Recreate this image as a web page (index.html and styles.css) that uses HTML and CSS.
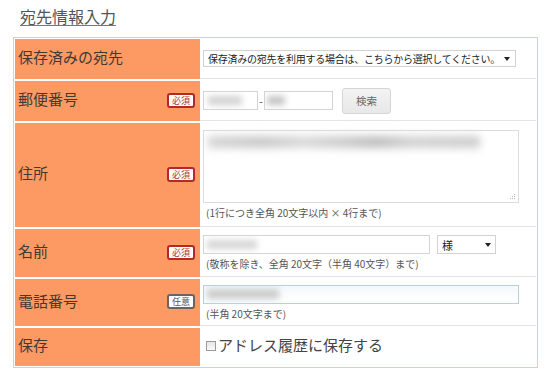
FILE: index.html
```html
<!DOCTYPE html>
<html lang="ja">
<head>
<meta charset="utf-8">
<title>宛先情報入力</title>
<link rel="stylesheet" href="styles.css">
</head>
<body>
<div class="page">
  <h1 class="title">宛先情報入力</h1>
  <div class="form">
    <div class="row r1">
      <div class="label"><span class="ltext">保存済みの宛先</span></div>
      <div class="value">
        <div class="select wide"><span class="seltext">保存済みの宛先を利用する場合は、こちらから選択してください。</span><i class="arrow"></i></div>
      </div>
    </div>
    <div class="row r2">
      <div class="label"><span class="ltext">郵便番号</span><span class="badge req">必須</span></div>
      <div class="value">
        <div class="line">
          <div class="input zip1"><span class="blur b-zip1"></span></div>
          <span class="dash">-</span>
          <div class="input zip2"><span class="blur b-zip2"></span></div>
          <div class="button">検索</div>
        </div>
      </div>
    </div>
    <div class="row r3">
      <div class="label"><span class="ltext">住所</span><span class="badge req">必須</span></div>
      <div class="value">
        <div class="textarea">
          <span class="blur b-addr"></span>
          <svg class="grip" width="6" height="6" viewBox="0 0 6 6"><g fill="#bbb"><rect x="4" y="0" width="1" height="1"/><rect x="2" y="2" width="1" height="1"/><rect x="4" y="2" width="1" height="1"/><rect x="0" y="4" width="1" height="1"/><rect x="2" y="4" width="1" height="1"/><rect x="4" y="4" width="1" height="1"/></g></svg>
        </div>
        <div class="hint">(1行につき全角 20文字以内 × 4行まで)</div>
      </div>
    </div>
    <div class="row r4">
      <div class="label"><span class="ltext">名前</span><span class="badge req">必須</span></div>
      <div class="value">
        <div class="line">
          <div class="input name"><span class="blur b-name"></span></div>
          <div class="select honor"><span>様</span><i class="arrow"></i></div>
        </div>
        <div class="hint">(敬称を除き、全角 20文字（半角 40文字）まで)</div>
      </div>
    </div>
    <div class="row r5">
      <div class="label"><span class="ltext">電話番号</span><span class="badge opt">任意</span></div>
      <div class="value">
        <div class="input tel"><span class="blur b-tel"></span></div>
        <div class="hint">(半角 20文字まで)</div>
      </div>
    </div>
    <div class="row r6">
      <div class="label"><span class="ltext">保存</span></div>
      <div class="value last">
        <label class="check"><span class="box"></span><span class="ctext">アドレス履歴に保存する</span></label>
      </div>
    </div>
  </div>
</div>
</body>
</html>
```

FILE: styles.css
```css
html, body {
  margin: 0;
  padding: 0;
  background: #ffffff;
}
body {
  font-family: "Noto Sans CJK JP", "Noto Sans", sans-serif;
  color: #444;
}
.page {
  padding: 0 0 0 13px;
  width: 525px;
}
.title {
  margin: 0;
  padding: 6px 0 0 7px;
  height: 30px;
  box-sizing: border-box;
  font-size: 16px;
  line-height: 20px;
  font-weight: normal;
  color: #555;
  text-decoration: underline;
  text-decoration-color: #777;
  text-underline-offset: 2px;
  text-decoration-thickness: 1px;
  margin-bottom: 7px;
}
.form {
  border: 1px solid #f1c9a6;
  padding: 1px;
  background: #fff;
}
.row {
  display: flex;
  margin-bottom: 2px;
}
.row.r6 { margin-bottom: 0; }
.r1 { height: 40px; }
.r2 { height: 40px; }
.r3 { height: 104px; }
.r4 { height: 48px; }
.r5 { height: 47px; }
.r6 { height: 38px; }
.label {
  width: 185px;
  flex: none;
  background: #fd9a63;
  display: flex;
  align-items: center;
  justify-content: space-between;
  padding: 0 5px 0 3px;
  box-sizing: border-box;
  font-size: 15px;
  color: #3f3a36;
}
.ltext {
  line-height: 18px;
  padding-bottom: 4px;
}
.badge {
  display: inline-flex;
  align-items: center;
  justify-content: center;
  width: 28px;
  height: 15px;
  box-sizing: border-box;
  border-radius: 3px;
  background: #fff;
  font-size: 9px;
  line-height: 1;
  margin-bottom: 2px;
}
.badge.req {
  border: 2px solid #b02a2a;
  color: #a33;
}
.badge.opt {
  border: 2px solid #6d625c;
  color: #555;
}
.value {
  flex: 1;
  border-bottom: 1px solid #e4e4e4;
  padding-left: 3px;
  box-sizing: border-box;
  display: flex;
  flex-direction: column;
  justify-content: center;
  align-items: flex-start;
}
.value.last { border-bottom: none; }
.line {
  display: flex;
  align-items: center;
}
.select {
  display: flex;
  align-items: center;
  justify-content: space-between;
  box-sizing: border-box;
  border: 1px solid #d2d2d2;
  background: #fff;
  color: #222;
  white-space: nowrap;
  overflow: hidden;
}
.select.wide {
  width: 313px;
  height: 17px;
  font-size: 10px;
  padding: 0 5px 0 4px;
}
.seltext {
  letter-spacing: -0.25px;
}
.select.honor {
  width: 59px;
  height: 19px;
  font-size: 11px;
  padding: 0 4px 0 4px;
  margin-left: 7px;
}
.arrow {
  width: 0;
  height: 0;
  flex: none;
  border-left: 3px solid transparent;
  border-right: 3px solid transparent;
  border-top: 4px solid #222;
}
.input {
  box-sizing: border-box;
  height: 19px;
  border: 1px solid #d4d4d4;
  background: #fff;
  display: flex;
  align-items: center;
  overflow: hidden;
}
.zip1 { width: 55px; }
.zip2 { width: 69px; }
.name { width: 227px; }
.tel {
  width: 316px;
  border-color: #b7d0dc;
  background: linear-gradient(#f4f8fa, #fff);
}
.dash {
  font-size: 11px;
  color: #555;
  width: 6px;
  text-align: center;
}
.button {
  margin-left: 9px;
  width: 49px;
  height: 26px;
  box-sizing: border-box;
  border: 1px solid #d6d6d6;
  border-radius: 3px;
  background: linear-gradient(#f3f3f3, #e8e8e8);
  color: #666;
  font-size: 10.5px;
  display: flex;
  align-items: center;
  justify-content: center;
}
.blur {
  display: block;
  height: 9px;
  background: #d2d2d2;
  filter: blur(3px);
  flex: none;
}
.b-zip1 { width: 34px; margin-left: 4px; }
.b-zip2 { width: 18px; margin-left: 2px; background: #c4c4c4; }
.b-name { width: 50px; margin-left: 3px; background: #d6d6d6; }
.b-tel { width: 72px; margin-left: 3px; height: 10px; background: #cbcbcb; }
.textarea {
  width: 316px;
  height: 73px;
  box-sizing: border-box;
  border: 1px solid #dcdcdc;
  background: #fff;
  display: flex;
  flex-direction: column;
  justify-content: space-between;
  padding: 5px 2px 2px 4px;
}
.b-addr {
  width: 272px;
  height: 12px;
  filter: blur(4px);
  background: linear-gradient(90deg, #d4d4d4 0%, #c8c8c8 20%, #d8d8d8 35%, #cbcbcb 50%, #bdbdbd 62%, #d2d2d2 75%, #cccccc 100%);
}
.grip {
  align-self: flex-end;
  display: block;
}
.hint {
  font-size: 10px;
  line-height: 13px;
  color: #555;
  margin-top: 3px;
  margin-left: 3px;
}
.check {
  display: flex;
  align-items: center;
  font-size: 15px;
  color: #444;
  padding-bottom: 4px;
}
.ctext {
  line-height: 18px;
}
.box {
  width: 10px;
  height: 10px;
  box-sizing: border-box;
  border: 1px solid #9a9a9a;
  background: linear-gradient(#e6e6e6, #fafafa);
  margin: 2px 2px 0 3px;
}
```
